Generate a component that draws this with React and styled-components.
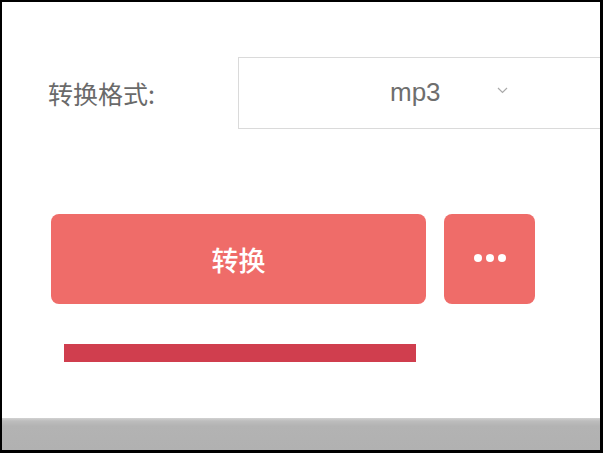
import React from 'react';
import styled, { createGlobalStyle } from 'styled-components';

const GlobalStyle = createGlobalStyle`
  html, body {
    margin: 0;
    padding: 0;
    background: #000;
  }
  * {
    box-sizing: border-box;
  }
`;

const Frame = styled.div`
  width: 603px;
  height: 453px;
  border-style: solid;
  border-color: #000;
  border-width: 2px 3px 3px 2px;
  background: #fff;
  display: flex;
  flex-direction: column;
  overflow: hidden;
  font-family: 'Liberation Sans', 'Noto Sans CJK SC', sans-serif;
`;

const Content = styled.div`
  flex: 1;
  display: flex;
  flex-direction: column;
  overflow: hidden;
`;

const FormRow = styled.div`
  display: flex;
  align-items: center;
  margin-top: 55px;
  padding-left: 46px;
`;

const Label = styled.span`
  width: 190px;
  flex: none;
  font-size: 25px;
  color: #6a6a6a;
  font-family: 'Noto Sans CJK SC', sans-serif;
`;

const Select = styled.div`
  flex: none;
  width: 420px;
  height: 72px;
  border: 1px solid #dadada;
  display: flex;
  align-items: center;
  padding-left: 151px;
`;

const SelectValue = styled.span`
  font-size: 26px;
  color: #6e6e6e;
  line-height: 1;
  margin-top: -3px;
`;

const Chevron = styled.svg`
  margin-left: 56px;
  margin-top: -6px;
`;

const ActionRow = styled.div`
  display: flex;
  gap: 18px;
  margin-top: 85px;
  padding-left: 49px;
`;

const Button = styled.button`
  width: ${(p) => p.$width}px;
  height: 90px;
  border: none;
  border-radius: 8px;
  background: #ef6c69;
  color: #fff;
  display: flex;
  align-items: center;
  justify-content: center;
  gap: 4px;
  padding: 0;
  font-family: 'Noto Sans CJK SC', sans-serif;
  font-size: 27px;
  font-weight: 500;
`;

const Dot = styled.span`
  width: 8px;
  height: 8px;
  border-radius: 50%;
  background: #fff;
  margin-top: -2px;
`;

const Progress = styled.div`
  width: 352px;
  height: 18px;
  margin-top: 40px;
  margin-left: 62px;
  background: #d03e4e;
`;

const Footer = styled.div`
  height: 32px;
  flex: none;
  background: linear-gradient(#d2d2d2 0, #bdbdbd 3px, #b3b3b3 8px, #b1b1b1 100%);
`;

export default function App() {
  return (
    <>
      <GlobalStyle />
      <Frame>
        <Content>
          <FormRow>
            <Label>转换格式:</Label>
            <Select>
              <SelectValue>mp3</SelectValue>
              <Chevron width="11" height="7" viewBox="0 0 11 7">
                <path d="M1 1l4.5 4.5L10 1" fill="none" stroke="#aaa" strokeWidth="1.2" />
              </Chevron>
            </Select>
          </FormRow>
          <ActionRow>
            <Button $width={375}>转换</Button>
            <Button $width={91}>
              <Dot />
              <Dot />
              <Dot />
            </Button>
          </ActionRow>
          <Progress />
        </Content>
        <Footer />
      </Frame>
    </>
  );
}
